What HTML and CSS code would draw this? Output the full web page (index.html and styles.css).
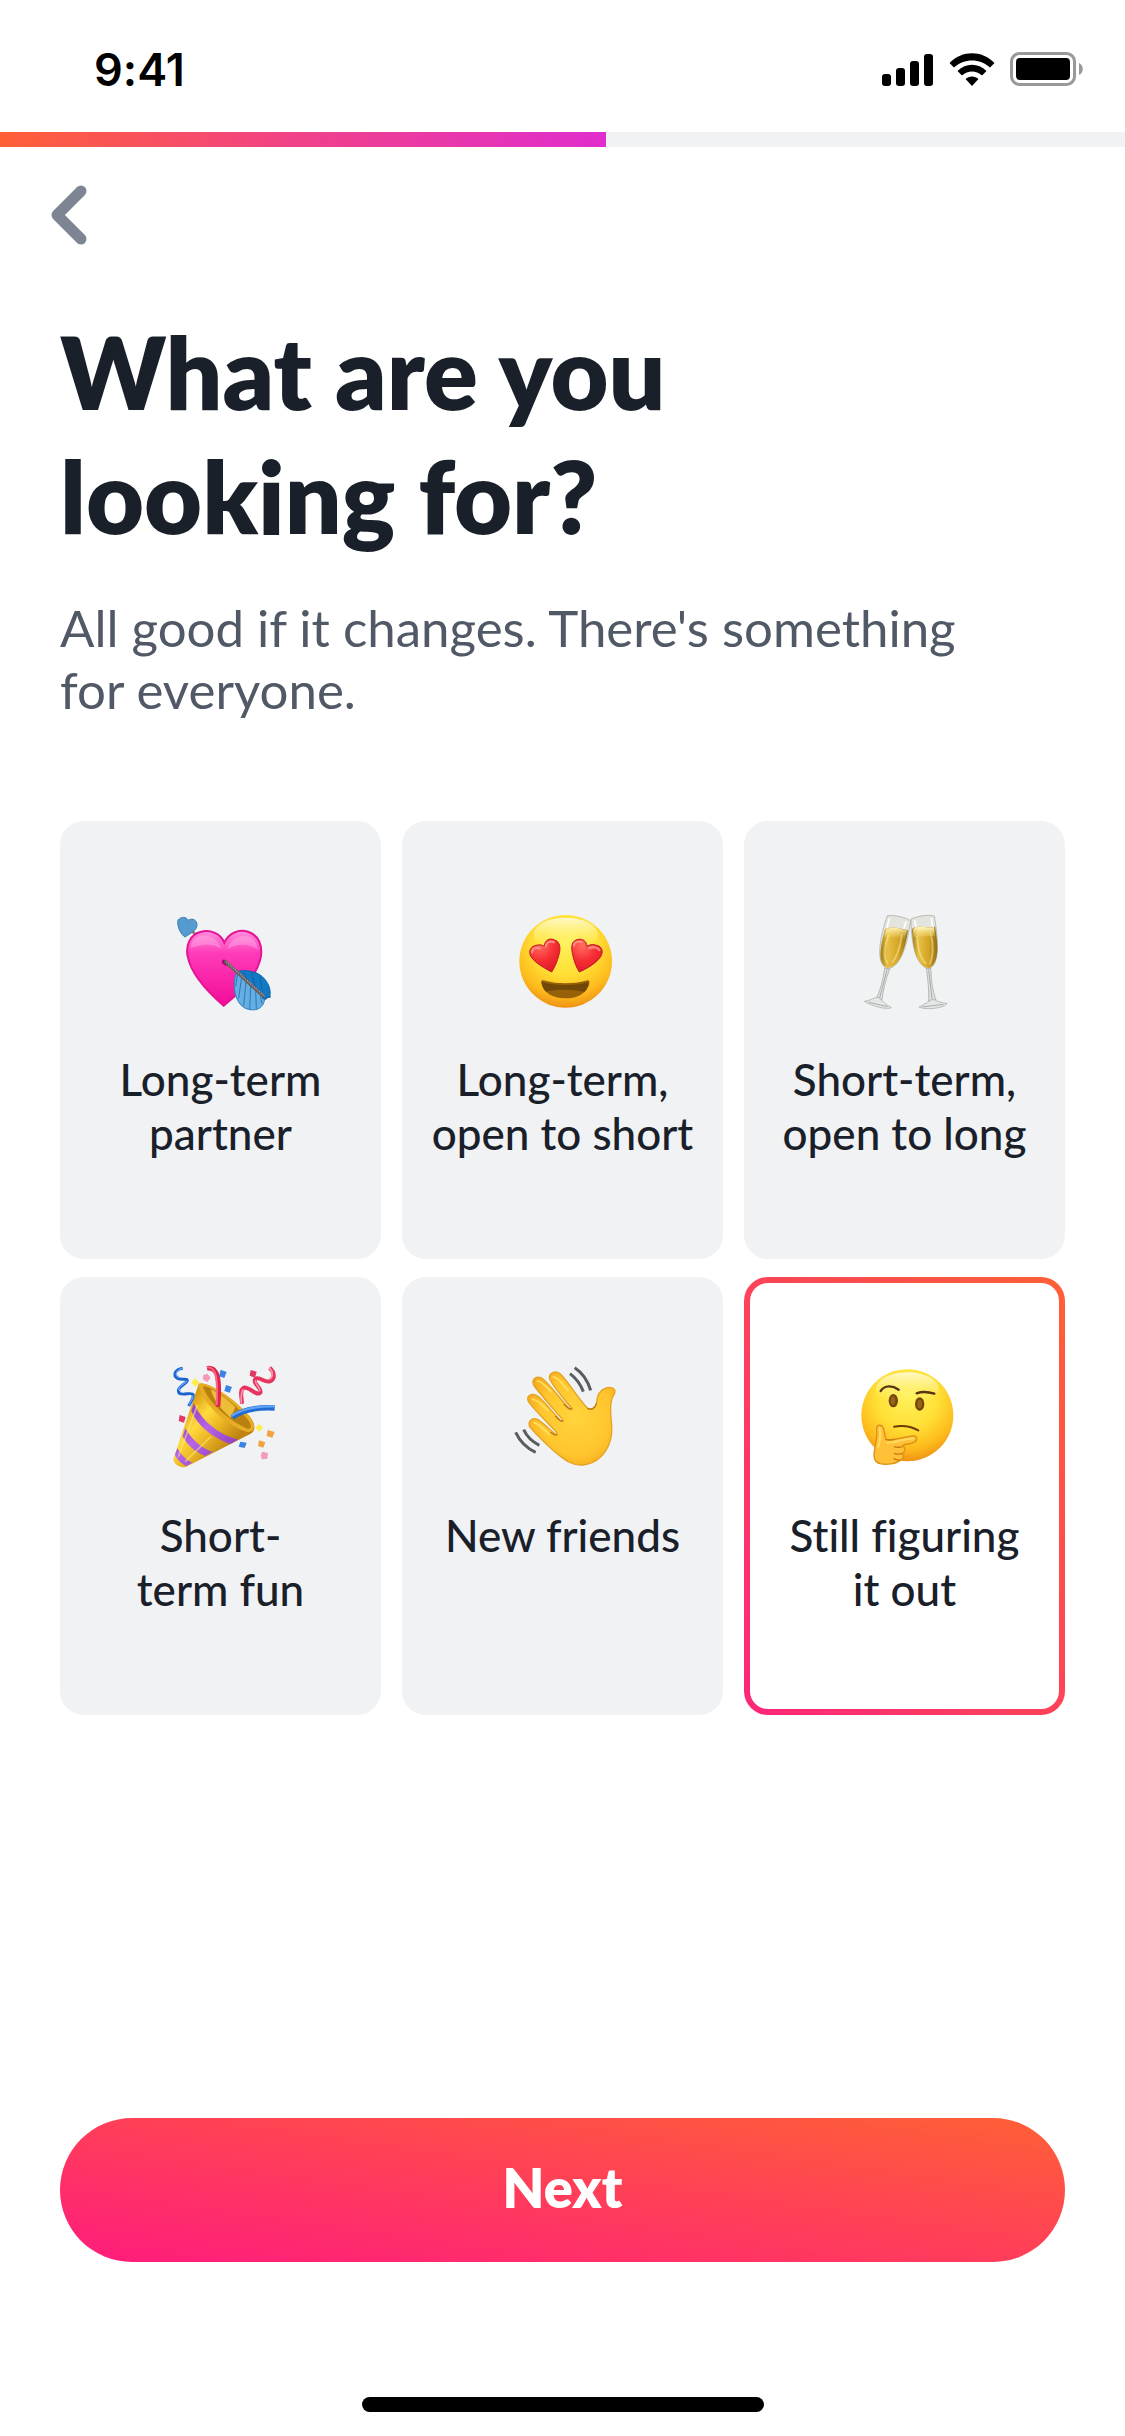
FILE: index.html
```html
<!DOCTYPE html>
<html lang="en">
<head>
  <meta charset="UTF-8">
  <meta name="viewport" content="width=device-width, initial-scale=1.0">
  <title>What are you looking for?</title>
  <link rel="stylesheet" href="styles.css">
</head>
<body>
  <header class="status">
    <span class="status__time">9:41</span>
    <div class="status__icons">
      <svg width="52" height="33" viewBox="0 0 52 33">
        <rect x="0" y="21" width="9" height="12" rx="3"/>
        <rect x="14" y="15" width="9" height="18" rx="3"/>
        <rect x="28" y="8" width="9" height="25" rx="3"/>
        <rect x="42" y="1" width="9" height="32" rx="3"/>
      </svg>
      <svg width="46" height="33" viewBox="0 0 46 33">
        <path d="M0.500 10C13-3 33-3 45.500 10L41 14.500C31 5 15 5 5 14.500Z"/>
        <path d="M8.500 18C17 9.500 29 9.500 37.500 18L33 22.500C27 17 19 17 13 22.500Z"/>
        <path d="M16.500 26C20 22.500 26 22.500 29.500 26L23 33Z"/>
      </svg>
      <svg width="73" height="34" viewBox="0 0 73 34">
        <rect x="1.500" y="1.500" width="63" height="31" rx="8" fill="none" stroke="#999" stroke-width="3"/>
        <rect x="6" y="6" width="54" height="22" rx="4"/>
        <path d="M69 11C74 13 74 21 69 23Z" fill="#999"/>
      </svg>
    </div>
  </header>
  <div class="progress">
    <div class="progress__bar"></div>
  </div>
  <nav class="nav">
    <button class="nav__back" type="button" aria-label="Back">
      <svg width="37" height="60" viewBox="0 0 37 60">
        <path d="M31 6L7 30L31 54" fill="none" stroke="#7c8591" stroke-width="11" stroke-linecap="round" stroke-linejoin="round"/>
      </svg>
    </button>
  </nav>
  <main class="main">
    <h1 class="title">What are you<br>looking for?</h1>
    <p class="subtitle">All good if it changes. There's something<br>for everyone.</p>
    <form class="options" id="options">
      <label class="option">
        <input class="option__input" type="radio" name="goal" value="long">
        <svg class="option__icon" viewBox="0 0 360 360">
          <defs>
            <linearGradient id="heart" x1="0" y1="0" x2="0" y2="1">
              <stop offset="0" stop-color="#ff8ddd"/>
              <stop offset=".3" stop-color="#ff3bb9"/>
              <stop offset="1" stop-color="#f20d98"/>
            </linearGradient>
          </defs>
          <path d="M86 86L108 108" stroke="#79706b" stroke-width="8"/>
          <path d="M86 86L108 108" stroke="#c9c4c0" stroke-width="3" stroke-dasharray="3 3"/>
          <path d="M51 60C61 49 76 50 82 61C94 52 109 61 108 76C107 91 89 100 72 111C60 104 47 80 51 60Z" fill="#569bd0" stroke="#397eaf" stroke-width="3"/>
          <path d="M190 128C178 98 146 88 118 96C88 104 73 135 80 169C90 220 139 275 188 317C240 276 288 226 299 173C306 136 292 106 263 96C233 86 204 98 190 128Z" fill="url(#heart)" stroke="#e51394" stroke-width="6"/>
          <path d="M89 145C91 114 118 103 139 108C162 113 174 128 181 147C159 130 123 131 89 145ZM199 148C207 121 227 108 251 108C276 110 288 126 290 149C262 130 229 130 199 148Z" fill="#ffb2e9" opacity=".42"/>
          <ellipse cx="192" cy="188" rx="11" ry="7" fill="#a60b6b" transform="rotate(40 192 188)"/>
          <path d="M228 215C217 235 216 277 230 301C242 326 266 333 288 328C303 322 312 310 311 288Z" fill="#65aee4" stroke="#2b80bd" stroke-width="3"/>
          <path d="M228 215C250 208 286 213 304 230C323 248 331 269 326 291L311 293Z" fill="#1479c5" stroke="#0c67ad" stroke-width="3"/>
          <path d="M230 220L224 259M242 231L233 295M255 245L248 318M269 258L266 328M284 271L286 326M298 283L302 311" stroke="#2b78b2" stroke-width="3"/>
          <path d="M248 216L258 238M272 218L282 260M297 229L304 275" stroke="#075998" stroke-width="2"/>
          <path d="M194 185L313 294" stroke="#665e60" stroke-width="10" stroke-linecap="round"/>
          <path d="M196 185L314 292" stroke="#b9afae" stroke-width="4" stroke-dasharray="3 4"/>
          <path d="M307 294L326 290" stroke="#126eb6" stroke-width="7" stroke-linecap="round"/>
        </svg>
        <span class="option__text">Long-term<br>partner</span>
      </label>
      <label class="option">
        <input class="option__input" type="radio" name="goal" value="long-open">
        <svg class="option__icon" viewBox="-7 0 360 360">
          <defs>
            <radialGradient id="face" cx=".5" cy=".3" r=".72">
              <stop offset="0" stop-color="#fff15a"/>
              <stop offset=".48" stop-color="#ffdf35"/>
              <stop offset=".8" stop-color="#fdb91b"/>
              <stop offset="1" stop-color="#eb8d13"/>
            </radialGradient>
            <linearGradient id="shine" x1="0" y1="0" x2="0" y2="1">
              <stop offset="0" stop-color="#fffbd9" stop-opacity=".9"/>
              <stop offset="1" stop-color="#fff25d" stop-opacity="0"/>
            </linearGradient>
            <radialGradient id="eye" cx=".35" cy=".2" r=".9">
              <stop offset="0" stop-color="#ff6e62"/>
              <stop offset=".5" stop-color="#f72f35"/>
              <stop offset="1" stop-color="#d91828"/>
            </radialGradient>
          </defs>
          <circle cx="181" cy="184" r="139" fill="url(#face)"/>
          <ellipse cx="181" cy="103" rx="96" ry="50" fill="url(#shine)"/>
          <path d="M117 139C118 119 134 113 148 120C166 126 166 147 161 164C156 184 148 202 139 216C119 205 93 191 79 173C69 160 72 142 88 137C100 133 111 134 117 139Z" fill="url(#eye)" stroke="#bd1b23" stroke-width="3"/>
          <path d="M245 139C244 122 229 113 212 120C196 127 198 148 202 164C206 184 213 202 222 216C242 207 268 193 284 173C296 157 291 139 274 136C262 132 252 134 245 139Z" fill="url(#eye)" stroke="#bd1b23" stroke-width="3"/>
          <path d="M80 157C80 146 91 141 102 145M121 139C124 126 136 121 146 127M206 137C207 126 218 122 229 127M252 145C263 139 276 142 282 150" fill="none" stroke="#ff9c8e" stroke-width="7" stroke-linecap="round" opacity=".75"/>
          <path d="M107 246C108 241 113 240 119 242C157 252 204 252 242 242C249 239 253 242 252 248C246 279 218 295 180 295C142 295 113 279 107 246Z" fill="#976108"/>
          <path d="M109 246C152 258 208 258 251 246C250 260 245 268 237 276C201 267 157 268 122 275C114 267 111 259 109 246Z" fill="#714708"/>
        </svg>
        <span class="option__text">Long-term,<br>open to short</span>
      </label>
      <label class="option">
        <input class="option__input" type="radio" name="goal" value="short-open">
        <svg class="option__icon" viewBox="-16 0 360 360">
          <defs>
            <linearGradient id="wine" x1="0" y1="0" x2="1" y2="0">
              <stop offset="0" stop-color="#a37c14"/>
              <stop offset=".25" stop-color="#e6c045"/>
              <stop offset=".65" stop-color="#d5a526"/>
              <stop offset="1" stop-color="#8f6d12"/>
            </linearGradient>
            <linearGradient id="foam" x1="0" y1="0" x2="0" y2="1">
              <stop offset="0" stop-color="#fff6c9"/>
              <stop offset="1" stop-color="#ffe575" stop-opacity="0"/>
            </linearGradient>
          </defs>
          <g stroke="#a3a39c" stroke-width="2">
            <path d="M111 47C134 44 166 53 181 62C172 119 158 198 112 207C71 191 91 105 111 47Z" fill="#e4e4df"/>
            <path d="M182 57C204 48 233 43 252 48C263 117 271 193 235 207C189 196 183 111 182 57Z" fill="#e4e4df"/>
            <path d="M103 205L118 208C105 239 99 271 95 299L77 298C91 269 98 239 103 205Z" fill="#dedfdf"/>
            <path d="M228 206L242 206C242 239 246 270 257 299L235 303C236 270 233 239 228 206Z" fill="#dedfdf"/>
            <path d="M42 304C63 301 73 291 84 292C94 300 108 317 123 322C118 330 70 322 42 304Z" fill="#e4e6e7"/>
            <path d="M206 321C223 316 235 300 247 298C258 301 271 310 290 310C286 323 229 332 206 321Z" fill="#e4e6e7"/>
          </g>
          <path d="M104 88C126 76 151 87 173 91C165 145 151 197 113 205C78 192 91 137 104 88Z" fill="url(#wine)"/>
          <path d="M185 87C208 71 231 88 254 80C264 132 268 192 235 205C196 196 187 139 185 87Z" fill="url(#wine)"/>
          <path d="M107 88C130 77 150 87 170 91L164 118C141 110 123 112 100 111ZM188 88C208 72 230 88 251 81L254 109C231 106 212 112 190 112Z" fill="url(#foam)"/>
          <path d="M115 105C102 137 99 171 111 190M155 103C149 145 139 171 126 188M200 107C202 147 213 178 227 191M241 97C250 139 249 171 238 193" fill="none" stroke="#f9e997" stroke-width="6" opacity=".5"/>
          <path d="M110 209L88 294M235 209L245 296M55 307L112 320M216 321L279 313" fill="none" stroke="#a9adab" stroke-width="3"/>
          <path d="M118 55L109 83M168 64L160 86M193 61L197 82M243 54L246 77" stroke="#fff" stroke-width="5"/>
        </svg>
        <span class="option__text">Short-term,<br>open to long</span>
      </label>
      <label class="option">
        <input class="option__input" type="radio" name="goal" value="short">
        <svg class="option__icon" viewBox="0 3 360 360">
          <defs>
            <linearGradient id="cone" x1=".1" y1=".3" x2=".65" y2=".8">
              <stop offset="0" stop-color="#d99712"/>
              <stop offset=".35" stop-color="#ffda3e"/>
              <stop offset=".6" stop-color="#eeba26"/>
              <stop offset="1" stop-color="#be8313"/>
            </linearGradient>
            <linearGradient id="stripe" x1="0" y1="0" x2="1" y2="1">
              <stop offset="0" stop-color="#8030b4"/>
              <stop offset=".45" stop-color="#b765e6"/>
              <stop offset="1" stop-color="#7a2bad"/>
            </linearGradient>
          </defs>
          <path d="M113 87C134 76 215 124 265 184C289 212 282 234 263 239L76 335C59 342 34 327 38 309Z" fill="url(#cone)"/>
          <path d="M98 145C116 184 159 235 231 254L207 267C153 246 110 213 91 168ZM73 220C92 252 118 279 155 291L133 303C101 291 78 269 65 244ZM49 279C62 302 75 314 94 323L76 333C58 324 47 311 42 299Z" fill="url(#stripe)"/>
          <path d="M113 86C133 75 216 124 265 183C292 217 277 240 247 227C195 208 113 134 113 86Z" fill="#e6ac24"/>
          <path d="M126 94C156 93 225 147 261 195C278 217 269 229 247 215C198 192 137 136 126 94Z" fill="#b9800f"/>
          <path d="M149 103C170 111 202 135 223 157L209 188C180 165 157 134 149 103Z" fill="#edbd37"/>
          <path d="M138 40C173 33 177 79 171 155" fill="none" stroke="#dc254a" stroke-width="14"/>
          <path d="M138 37C169 34 170 80 167 150" fill="none" stroke="#ff6684" stroke-width="6"/>
          <path d="M214 187C247 163 293 156 341 159" fill="none" stroke="#216bd2" stroke-width="16"/>
          <path d="M212 182C247 160 291 153 341 154" fill="none" stroke="#62a4fb" stroke-width="7"/>
          <path d="M65 40C41 44 34 61 51 71C63 76 82 68 78 79C69 91 44 98 55 115C68 123 93 109 97 120C98 132 90 138 83 153" fill="none" stroke="#1c63cd" stroke-width="9"/>
          <path d="M64 39C44 49 40 59 54 67M78 79C56 95 48 98 58 109M96 121C98 129 90 136 84 149" fill="none" stroke="#66a6ff" stroke-width="4"/>
          <path d="M326 38C343 53 342 74 327 79C310 84 294 62 283 72C273 83 305 102 298 113C286 125 265 94 248 98C234 108 243 127 243 146" fill="none" stroke="#e6345d" stroke-width="12"/>
          <path d="M325 38C339 53 335 70 324 72M284 76C280 87 302 102 295 109M247 103C238 114 241 129 241 144" fill="none" stroke="#ff94ae" stroke-width="5"/>
          <path d="M102 70L115 82L103 95L91 83ZM295 207L306 218L294 230L284 218Z" fill="#ffed43"/>
          <path d="M127 60L139 56L149 68L139 81L125 73ZM304 290L321 294L319 311L303 313L299 301Z" fill="#f49abb"/>
          <path d="M179 44L197 51L190 69L174 64ZM195 90L213 96L206 113L190 108ZM238 260L257 263L251 279L233 275Z" fill="#3c83e5"/>
          <path d="M269 45L287 50L282 68L266 62ZM56 180L74 186L69 203L53 198Z" fill="#df3964"/>
          <path d="M320 225L341 231L334 248L317 243ZM294 256L313 262L307 278L291 273Z" fill="#f3a23f"/>
          <path d="M109 151L52 305M150 245L72 320" stroke="#fff18d" stroke-width="5" opacity=".5"/>
        </svg>
        <span class="option__text">Short-<br>term fun</span>
      </label>
      <label class="option">
        <input class="option__input" type="radio" name="goal" value="friends">
        <svg class="option__icon" viewBox="-7 3 360 360">
          <defs>
            <radialGradient id="hand" cx=".55" cy=".48" r=".63">
              <stop offset="0" stop-color="#ffd43d"/>
              <stop offset=".65" stop-color="#ffc52d"/>
              <stop offset="1" stop-color="#f3a51d"/>
            </radialGradient>
          </defs>
          <path d="M133 72C129 54 151 43 166 58C193 86 218 130 246 159C258 167 270 158 273 146C275 120 284 104 303 99C322 93 335 105 326 119C315 134 315 151 316 173C317 202 323 220 317 247C308 295 273 326 232 330C197 333 174 310 149 291C122 267 94 239 77 220C62 203 79 184 98 194C116 206 138 229 151 238C154 240 157 236 155 233C126 203 97 174 73 145C56 124 79 111 98 124C124 146 145 176 166 197C170 201 174 198 171 193C143 160 111 125 89 96C71 74 96 58 113 72C143 99 169 139 194 162C199 164 201 161 197 157C174 130 147 100 133 72Z" fill="url(#hand)" stroke="#e5a222" stroke-width="4"/>
          <path d="M144 66C157 64 175 91 187 106M96 78C109 78 124 96 137 110M82 133C99 136 112 152 127 167M86 203C99 205 117 224 132 239" stroke="#ffe66e" stroke-width="6" fill="none" stroke-linecap="round" opacity=".75"/>
          <path d="M155 239C151 244 143 237 137 233M173 197C168 203 158 192 151 184M200 160C196 167 184 157 176 148M247 160C259 167 270 158 273 146" stroke="#bd7914" stroke-width="4" fill="none" stroke-linecap="round"/>
          <path d="M194 56C213 70 225 87 234 110M208 38C231 53 247 76 256 106M55 224C66 248 80 260 102 271M31 232C45 262 63 279 91 292" stroke="#595d61" stroke-width="9" fill="none"/>
        </svg>
        <span class="option__text">New friends</span>
      </label>
      <label class="option">
        <input class="option__input" type="radio" name="goal" value="unsure" checked>
        <svg class="option__icon" viewBox="-16 3 360 360">
          <circle cx="171" cy="181" r="138" fill="url(#face)"/>
          <ellipse cx="171" cy="101" rx="94" ry="49" fill="url(#shine)"/>
          <ellipse cx="129" cy="137" rx="14" ry="20" fill="#75440a"/>
          <ellipse cx="208" cy="147" rx="14" ry="20" fill="#75440a"/>
          <ellipse cx="128" cy="137" rx="7" ry="13" fill="#95631a"/>
          <ellipse cx="208" cy="147" rx="7" ry="13" fill="#95631a"/>
          <path d="M91 108C103 90 126 91 145 104M199 115C217 108 233 110 252 116" stroke="#583312" stroke-width="7" fill="none" stroke-linecap="round"/>
          <path d="M131 215C158 210 182 214 204 226" stroke="#6b3b09" stroke-width="6" fill="none" stroke-linecap="round"/>
          <path d="M79 222C77 207 96 207 100 222C105 238 103 247 107 253C126 259 158 246 188 243C201 242 203 256 191 262C177 269 166 265 156 272C169 281 164 291 156 295C164 305 157 312 150 315C139 327 108 330 89 326C70 321 69 302 73 283C77 261 81 245 79 222Z" fill="#ffc138" stroke="#df9017" stroke-width="4"/>
          <path d="M88 220C92 235 89 257 84 275M112 263C137 263 163 251 188 250" stroke="#ffdf65" stroke-width="7" fill="none" stroke-linecap="round" opacity=".8"/>
          <path d="M107 254C117 256 125 255 132 253M153 276C144 277 137 278 132 275M155 296C145 299 137 297 132 295M149 315C141 316 136 314 131 311" stroke="#cb7c13" stroke-width="4" fill="none" stroke-linecap="round"/>
        </svg>
        <span class="option__text">Still figuring<br>it out</span>
      </label>
    </form>
  </main>
  <footer class="footer">
    <button class="footer__next" type="submit" form="options">Next</button>
    <div class="footer__home"></div>
  </footer>
</body>
</html>
```

FILE: styles.css
```css
* {
  box-sizing: border-box;
}

body {
  display: flex;
  flex-direction: column;
  min-height: 100vh;
  margin: 0;
  background: #fff;
  color: #1a202a;
  font-family: Lato, "Open Sans", sans-serif;
  font-variant-ligatures: none;
}

.status {
  display: flex;
  justify-content: space-between;
  align-items: center;
  height: 132px;
  padding: 6px 42px 0 94px;
}

.status__time {
  color: #000;
  font-family: Inter, sans-serif;
  font-size: 45px;
  font-weight: 600;
}

.status__icons {
  display: flex;
  align-items: center;
  gap: 15px;
}

.progress {
  height: 15px;
  background: #f0f2f4;
}

.progress__bar {
  width: calc(100% * 7 / 13);
  height: 100%;
  background: linear-gradient(to right, #ff6036, #f0418a 50%, #e02dce);
}

.nav {
  padding: 38px 50px 0;
}

.nav__back {
  display: flex;
  padding: 0;
  border: 0;
  background: none;
}

.main {
  padding: 64px 60px;
}

.title {
  margin: 0;
  font-size: 100px;
  font-weight: 800;
  line-height: 124px;
}

.subtitle {
  margin: 40px 0 0;
  color: #505965;
  font-size: 51px;
  line-height: 62px;
}

.options {
  display: grid;
  grid-template-columns: repeat(3, 1fr);
  gap: 18px 21px;
  margin-top: 100px;
}

.option {
  display: flex;
  flex-direction: column;
  align-items: center;
  min-height: 438px;
  padding: 73px 0;
  border: 6px solid transparent;
  border-radius: 24px;
  background: #f0f2f4 border-box;
}

.option:has(:checked) {
  background: linear-gradient(#fff, #fff) padding-box, linear-gradient(to top right, #fd267a, #ff6036) border-box;
}

.option__input {
  position: absolute;
  opacity: 0;
}

.option__icon {
  width: 120px;
  height: 120px;
}

.option__text {
  margin-top: 32px;
  font-size: 44px;
  font-weight: 500;
  line-height: 54px;
  text-align: center;
}

.footer {
  display: flex;
  flex-direction: column;
  align-items: center;
  margin-top: auto;
  padding: 0 60px 24px;
}

.footer__next {
  width: 100%;
  height: 144px;
  padding: 0 0 6px;
  border: 0;
  border-radius: 72px;
  background: linear-gradient(to top right, #ff1c7c, #ff6036);
  color: #fff;
  font-family: inherit;
  font-size: 54px;
  font-weight: 800;
}

.footer__home {
  width: 402px;
  height: 15px;
  margin-top: 135px;
  border-radius: 8px;
  background: #000;
}
```
